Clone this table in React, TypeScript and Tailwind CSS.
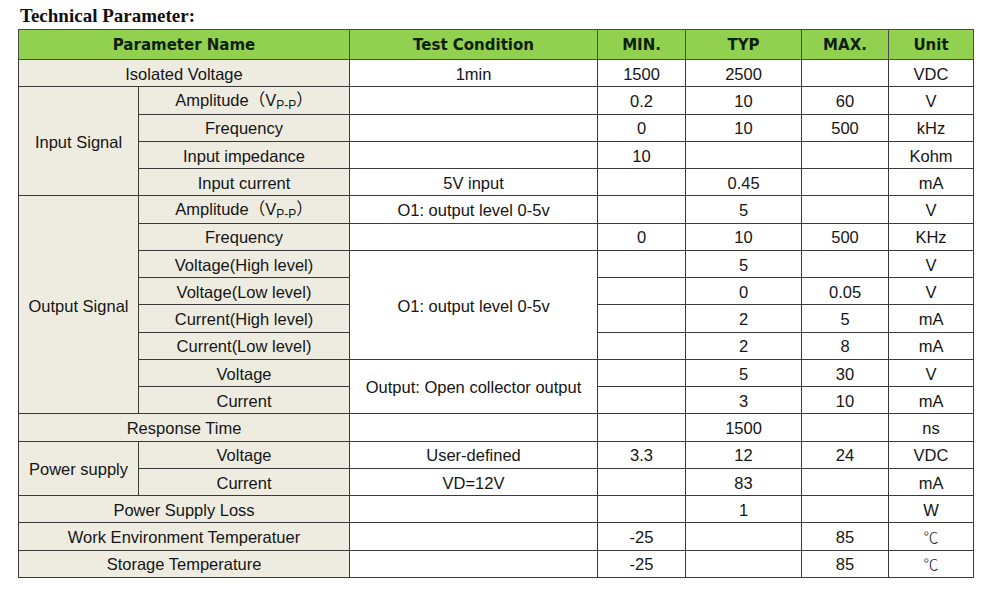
import React from 'react';

type Cell = {
  text?: React.ReactNode;
  rowSpan?: number;
  colSpan?: number;
  beige?: boolean;
};

const VPP = (
  <>
    Amplitude<span style={{ fontFamily: '"Noto Sans CJK SC", sans-serif' }}>（</span>V
    <span className="text-[12px] align-[-3px]">P-P</span>
    <span style={{ fontFamily: '"Noto Sans CJK SC", sans-serif' }}>）</span>
  </>
);

const DEG = <span className="font-['Noto_Sans_CJK_SC',sans-serif] font-light text-[15px]">℃</span>;

const b = (text?: React.ReactNode, rowSpan?: number, colSpan?: number): Cell => ({ text, rowSpan, colSpan, beige: true });
const w = (text?: React.ReactNode, rowSpan?: number): Cell => ({ text, rowSpan });

const rows: Cell[][] = [
  [b('Isolated Voltage', 1, 2), w('1min'), w('1500'), w('2500'), w(), w('VDC')],
  [b('Input Signal', 4), b(VPP), w(), w('0.2'), w('10'), w('60'), w('V')],
  [b('Frequency'), w(), w('0'), w('10'), w('500'), w('kHz')],
  [b('Input impedance'), w(), w('10'), w(), w(), w('Kohm')],
  [b('Input current'), w('5V input'), w(), w('0.45'), w(), w('mA')],
  [b('Output Signal', 8), b(VPP), w('O1: output level 0-5v'), w(), w('5'), w(), w('V')],
  [b('Frequency'), w(), w('0'), w('10'), w('500'), w('KHz')],
  [b('Voltage(High level)'), w('O1: output level 0-5v', 4), w(), w('5'), w(), w('V')],
  [b('Voltage(Low level)'), w(), w('0'), w('0.05'), w('V')],
  [b('Current(High level)'), w(), w('2'), w('5'), w('mA')],
  [b('Current(Low level)'), w(), w('2'), w('8'), w('mA')],
  [b('Voltage'), w('Output: Open collector output', 2), w(), w('5'), w('30'), w('V')],
  [b('Current'), w(), w('3'), w('10'), w('mA')],
  [b('Response Time', 1, 2), w(), w(), w('1500'), w(), w('ns')],
  [b('Power supply', 2), b('Voltage'), w('User-defined'), w('3.3'), w('12'), w('24'), w('VDC')],
  [b('Current'), w('VD=12V'), w(), w('83'), w(), w('mA')],
  [b('Power Supply Loss', 1, 2), w(), w(), w('1'), w(), w('W')],
  [b('Work Environment Temperatuer', 1, 2), w(), w('-25'), w(), w('85'), w(DEG)],
  [b('Storage Temperature', 1, 2), w(), w('-25'), w(), w('85'), w(DEG)],
];

const headers: { text: string; colSpan?: number }[] = [
  { text: 'Parameter Name', colSpan: 2 },
  { text: 'Test Condition' },
  { text: 'MIN.' },
  { text: 'TYP' },
  { text: 'MAX.' },
  { text: 'Unit' },
];

const widths = [120, 211, 248, 88, 116, 87, 85];

export default function App() {
  return (
    <div className="w-[1000px] h-[592px] bg-white overflow-hidden">
      <div className="h-[29px] pl-[20px] pt-[5px] font-['Liberation_Serif',serif] font-bold text-[19px] leading-[22px] text-[#111]">
        Technical Parameter:
      </div>
      <table className="ml-[18px] w-[955px] table-fixed border-collapse font-['Liberation_Sans',Arial,sans-serif] text-[16.5px] text-[#151515]">
        <colgroup>
          {widths.map((px, i) => (
            <col key={i} style={{ width: px }} />
          ))}
        </colgroup>
        <thead>
          <tr className="h-[30px] bg-[#92d050]">
            {headers.map((h, i) => (
              <th
                key={i}
                colSpan={h.colSpan}
                className="border border-[#4a4a4a] p-0 pt-[2px] text-center font-['DejaVu_Sans',sans-serif] font-bold text-[15px] text-[#0c200c]"
              >
                {h.text}
              </th>
            ))}
          </tr>
        </thead>
        <tbody>
          {rows.map((row, r) => (
            <tr key={r} className="h-[27.26px]">
              {row.map((c, i) => (
                <td
                  key={i}
                  rowSpan={c.rowSpan}
                  colSpan={c.colSpan}
                  className={`border border-[#3a3a3a] p-0 pt-[2px] text-center leading-none whitespace-nowrap ${c.beige ? 'bg-[#eeece1]' : 'bg-white'}`}
                >
                  {c.text}
                </td>
              ))}
            </tr>
          ))}
        </tbody>
      </table>
    </div>
  );
}
